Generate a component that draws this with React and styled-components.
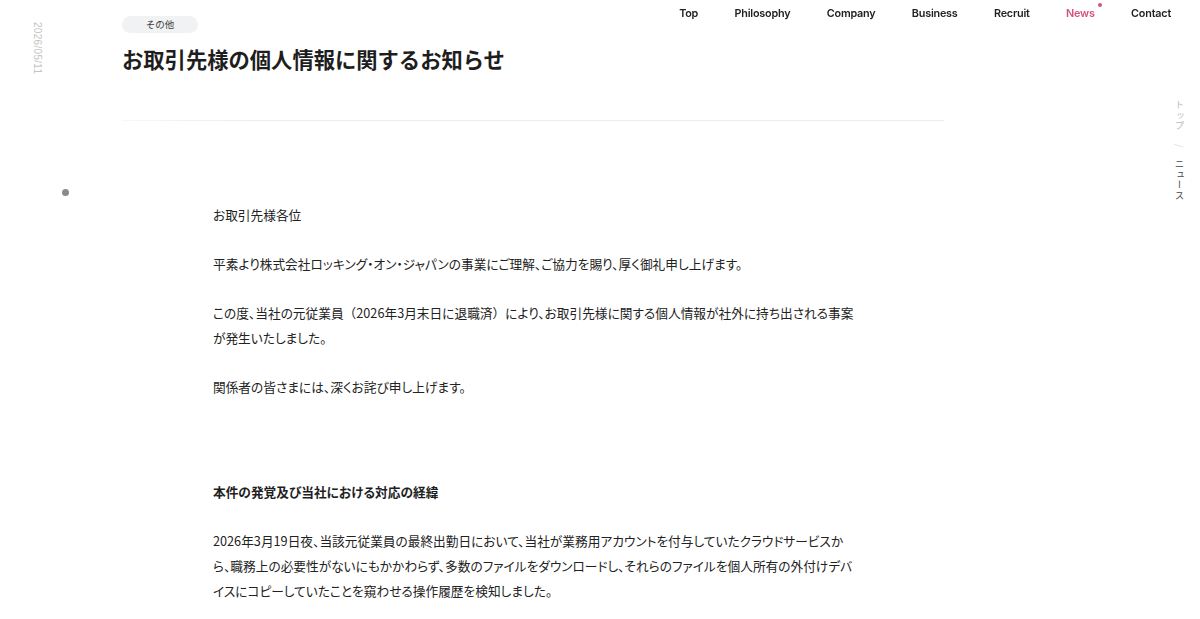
import React from 'react';
import styled, { createGlobalStyle } from 'styled-components';

const GlobalStyle = createGlobalStyle`
  html, body {
    margin: 0;
    padding: 0;
    background: #fff;
  }
  body {
    font-family: "Noto Sans CJK JP", "Noto Sans", sans-serif;
    color: #222;
    -webkit-font-smoothing: antialiased;
  }
`;

const navItems = ['Top', 'Philosophy', 'Company', 'Business', 'Recruit', 'News', 'Contact'];

const App = () => {
  return (
    <>
      <GlobalStyle />
      <HeaderStyle>
        <NavListStyle>
          {navItems.map((item) => (
            <NavItemStyle key={item} $active={item === 'News'}>
              {item}
            </NavItemStyle>
          ))}
        </NavListStyle>
      </HeaderStyle>

      <PageStyle>
        <LeftRailStyle>
          <DateStyle>2026/05/11</DateStyle>
          <RailDotStyle />
        </LeftRailStyle>

        <MainStyle>
          <TagStyle>その他</TagStyle>
          <TitleStyle>お取引先様の個人情報に関するお知らせ</TitleStyle>
          <DividerStyle />

          <ArticleStyle>
            <ParagraphStyle>お取引先様各位</ParagraphStyle>
            <ParagraphStyle>
              平素より株式会社ロッキング・オン・ジャパンの事業にご理解、ご協力を賜り、厚く御礼申し上げます。
            </ParagraphStyle>
            <ParagraphStyle>
              この度、当社の元従業員<ParenStyle>（</ParenStyle>2026年3月末日に退職済<ParenStyle>）</ParenStyle>により、お取引先様に関する個人情報が社外に持ち出される事案が発生いたしました。
            </ParagraphStyle>
            <ParagraphStyle>関係者の皆さまには、深くお詫び申し上げます。</ParagraphStyle>

            <SectionHeadingStyle>本件の発覚及び当社における対応の経緯</SectionHeadingStyle>
            <ParagraphStyle>
              2026年3月19日夜、当該元従業員の最終出勤日において、当社が業務用アカウントを付与していたクラウドサービスから、職務上の必要性がないにもかかわらず、多数のファイルをダウンロードし、それらのファイルを個人所有の外付けデバイスにコピーしていたことを窺わせる操作履歴を検知しました。
            </ParagraphStyle>
          </ArticleStyle>
        </MainStyle>

        <RightRailStyle>
          <BreadcrumbStyle>
            <CrumbStyle>トップ</CrumbStyle>
            <CrumbSeparatorStyle>/</CrumbSeparatorStyle>
            <CrumbStyle $current>ニュース</CrumbStyle>
          </BreadcrumbStyle>
        </RightRailStyle>
      </PageStyle>
    </>
  );
};

const HeaderStyle = styled.header`
  position: fixed;
  top: 0;
  right: 0;
  z-index: 10;
  padding: 6px 29px 0 0;
`;

const NavListStyle = styled.nav`
  display: flex;
  align-items: center;
  gap: 36.4px;
`;

const NavItemStyle = styled.a`
  position: relative;
  font-family: Inter, "Liberation Sans", sans-serif;
  font-size: 10.8px;
  font-weight: 600;
  letter-spacing: -0.2px;
  line-height: 16px;
  color: ${(p) => (p.$active ? '#d4527e' : '#222')};
  cursor: pointer;
  ${(p) =>
    p.$active &&
    `
    &::after {
      content: "";
      position: absolute;
      top: -3px;
      right: -7px;
      width: 4px;
      height: 4px;
      border-radius: 50%;
      background: #d4527e;
    }
  `}
`;

const PageStyle = styled.div`
  display: grid;
  grid-template-columns: 122px 822px 1fr;
  min-height: 619px;
`;

const LeftRailStyle = styled.aside`
  display: flex;
  flex-direction: column;
  align-items: flex-start;
  padding: 22px 0 0 32px;
`;

const DateStyle = styled.div`
  writing-mode: vertical-rl;
  font-family: "Liberation Sans", Arial, sans-serif;
  font-size: 10px;
  letter-spacing: 0.3px;
  color: #c4c4c4;
  line-height: 10px;
`;

const RailDotStyle = styled.span`
  display: block;
  width: 7px;
  height: 7px;
  border-radius: 50%;
  background: #8a8a8a;
  margin: 115px 0 0 30px;
`;

const MainStyle = styled.main`
  display: flex;
  flex-direction: column;
  padding-top: 16px;
`;

const TagStyle = styled.span`
  align-self: flex-start;
  width: 76px;
  height: 17px;
  line-height: 17px;
  border-radius: 9px;
  background: #f1f2f4;
  color: #3a3a3a;
  font-size: 9.5px;
  text-align: center;
`;

const TitleStyle = styled.h1`
  margin: 11px 0 0;
  font-size: 21.3px;
  font-weight: 700;
  line-height: 30px;
  color: #1e1e1e;
`;

const DividerStyle = styled.hr`
  margin: 46px 0 0;
  border: 0;
  height: 1px;
  background: linear-gradient(to right, #f7f7f7, #ededed 15%, #ededed);
`;

const ArticleStyle = styled.article`
  padding: 81px 0 0 91px;
  width: 643px;
  font-feature-settings: "palt";
`;

const ParagraphStyle = styled.p`
  margin: 0 0 24px;
  font-size: 12.7px;
  line-height: 25px;
  color: #222;
`;

const ParenStyle = styled.span`
  font-feature-settings: normal;
`;

const SectionHeadingStyle = styled.h2`
  margin: 80px 0 24px;
  font-size: 12.7px;
  font-weight: 700;
  line-height: 25px;
  color: #1e1e1e;
`;

const RightRailStyle = styled.aside`
  display: flex;
  justify-content: flex-end;
  padding: 100px 14px 0 0;
`;

const BreadcrumbStyle = styled.nav`
  writing-mode: vertical-rl;
  display: flex;
  align-items: center;
  gap: 12px;
  height: max-content;
`;

const CrumbStyle = styled.span`
  font-size: 9.5px;
  letter-spacing: 1px;
  line-height: 12px;
  color: ${(p) => (p.$current ? '#444' : '#bdbdbd')};
`;

const CrumbSeparatorStyle = styled.span`
  font-size: 9px;
  color: #e0e0e0;
`;

export default App;
